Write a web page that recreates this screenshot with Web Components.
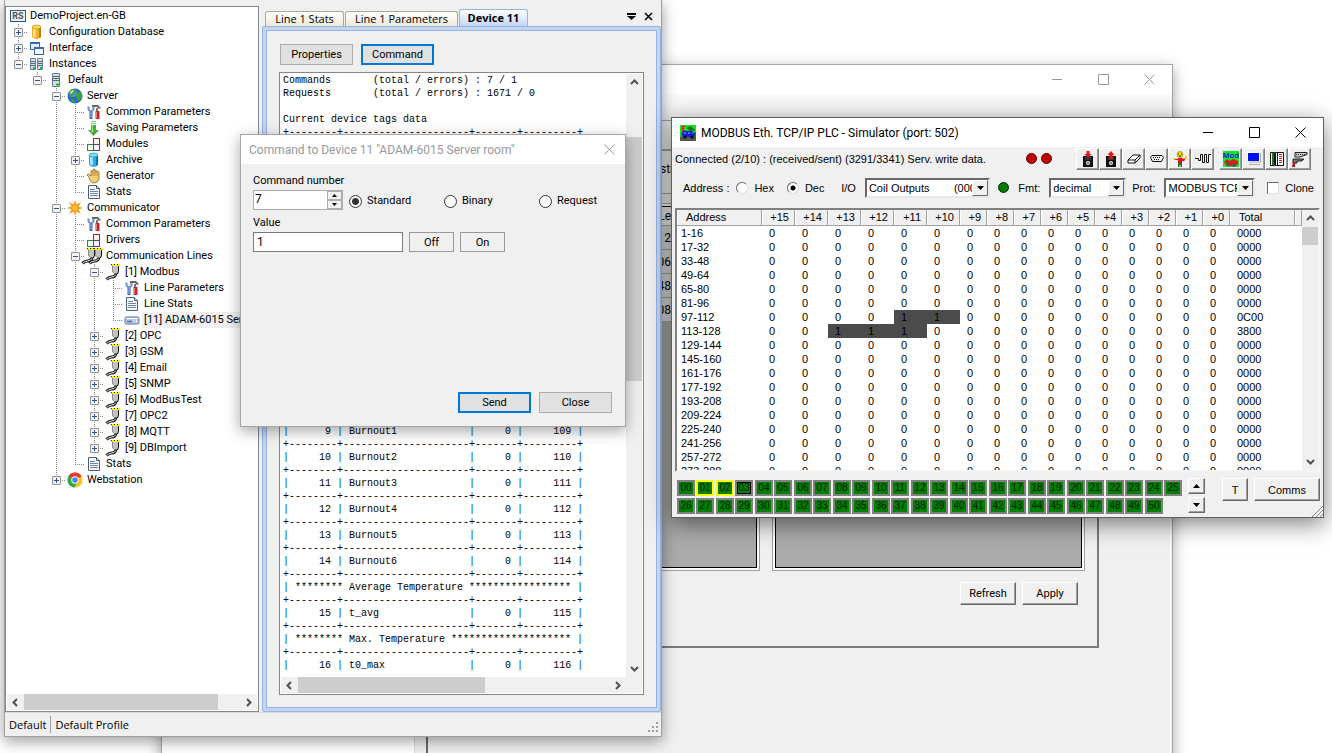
<!DOCTYPE html>
<html lang="en">
<head>
<meta charset="utf-8">
<title>DemoProject.en-GB</title>
<style>
  html, body {
    height: 100%;
    margin: 0;
  }
  body {
    overflow: hidden;
    background: #fff;
    color: #000;
    font-family: Roboto, "Liberation Sans", sans-serif;
    font-size: 11px;
    --title-font: Roboto, "Open Sans", sans-serif;
  }
</style>
</head>
<body>
<desk-top></desk-top>

<script>
/* ---------- icons ---------- */
const CONNECTOR = `
  <path d="M10.500 9v2q-1 2-4 2-3 0-5 2.500" fill="none" stroke="#222" stroke-width="3"/>
  <path d="M10.500 9v2q-1 2-4 2-3 0-5 2.500" fill="none" stroke="#ddd"/>
  <path d="M7 2h7v5l-1 3h-4L7 7z" fill="#c4c4c4"/>
  <path d="M13.500 2v5l-1 3h-3" fill="none" stroke="#111"/><path d="M7.500 2v5l1 2" fill="none" stroke="#888"/>
  <path d="M6 1h9" stroke="#ffee00" stroke-width="2"/><path d="M6 .5h9" stroke="#222" stroke-dasharray="1 2"/>`;

const ICONS = {
  rs: `<rect x=".5" y="2.500" width="15" height="11" fill="#e8eef4" stroke="#2a5d98"/>
    <text x="8" y="11" font-size="9" font-weight="bold" text-anchor="middle" fill="#555">RS</text>`,
  db: `<path d="M3 3v10q5 4 9 0V3z" fill="#f0b020"/><path d="M4 4v9h3V4z" fill="#ffe48a"/><path d="M10 4v10l2-1V3z" fill="#bd7c08"/><ellipse cx="7.500" cy="3" rx="4.500" ry="2" fill="#ffd75e" stroke="#b07810" stroke-width=".6"/>`,
  archive: `<path d="M3 3v10q5 4 9 0V3z" fill="#28aee8"/><path d="M4 4v9h3V4z" fill="#9be4ff"/><path d="M10 4v10l2-1V3z" fill="#0878b0"/><ellipse cx="7.500" cy="3" rx="4.500" ry="2" fill="#7fdcff" stroke="#0a80b8" stroke-width=".6"/>`,
  windows: `<rect x="1.500" y="2.500" width="9" height="7" fill="#eaf2ff" stroke="#3a5f9c"/><path d="M1 3h10" stroke="#3a68b8" stroke-width="2"/>
    <rect x="5.500" y="7.500" width="9" height="7" fill="#f4f8ff" stroke="#3a5f9c"/><path d="M5 8h10" stroke="#3a68b8" stroke-width="2"/>`,
  servers: `<g stroke="#6c7f92" fill="#d5e0ea"><path d="M1.500 2.500h5v11h-5zM8.500 2.500h5v11h-5z"/></g>
    <path d="M2 5.500h4M2 7.500h4M2 9.500h4M9 5.500h4M9 7.500h4M9 9.500h4" stroke="#51687e"/><path d="M4 12h2M11 12h2" stroke="#10c020" stroke-width="2"/>`,
  server: `<path d="M4.500 1.500h7v13h-7z" fill="#d5e0ea" stroke="#6c7f92"/><path d="M5 4.500h6M5 6.500h6M5 8.500h6" stroke="#51687e"/><path d="M8 12.500h3" stroke="#10c020" stroke-width="2"/>`,
  globe: `<circle cx="8" cy="8" r="7.500" fill="#2c68c4"/><circle cx="6" cy="5" r="4" fill="#79a9ea" opacity=".6"/>
    <path d="M2 4l3-3 4 1-1 3-3 2-1 3-2-2zM9 6l4-3 2 4-1 4-3 2-2-4zM5 11l3 1-1 3-3-2z" fill="#3aa53a"/><path d="M3 4l3-2 1 1-3 3z" fill="#d6f2c8"/>`,
  tools: `<path d="M5 7v8" stroke="#2c62b0" stroke-width="3"/><path d="M5 8v6" stroke="#a8c4ec"/><path d="M2.500 2.500v3q2.500 3.500 5 0v-3" fill="none" stroke="#6d94cc" stroke-width="2"/>
    <path d="M11 4v5" stroke="#777" stroke-width="2"/><path d="M6 1l6 0 3 3-2 1-2-2H6z" fill="#666"/><path d="M11.500 7v8" stroke="#c02828" stroke-width="4"/><path d="M10.500 8v6" stroke="#f08080"/>`,
  down: `<path d="M5 1.500h5M5 3.500h5" stroke="#7fc07f"/><path d="M5 5h5v5h3l-5.500 6L2 10h3z" fill="#43ae38"/><path d="M6 5h1v8l-3-2.500h2z" fill="#98e088"/>`,
  modules: `<rect x="7.500" y="2.500" width="6" height="6" fill="#fff0f0" stroke="#b02030"/><rect x="1.500" y="8.500" width="6" height="6" fill="#f0fff0" stroke="#2c8a38"/><rect x="7.500" y="8.500" width="6" height="6" fill="#f6f0ff" stroke="#5a3c90"/>`,
  hand: `<path d="M3 9L1 7q1-2 3 0l1 1V3q1-1 2 0V1.500q1-1 2 0V3q1-1 2 0v1q2-1 2 0v7q-1 4-5 4T3 9z" fill="#f2cf80" stroke="#8e6410" stroke-width=".8"/><path d="M7 3v5M9 3v5M11 4v4" stroke="#a87820" stroke-width=".8"/>`,
  page: `<path d="M2.500 1.500h8l3 3v10h-11z" fill="#f4f8fd" stroke="#4a6080"/><path d="M10.500 1.500v3h3" fill="#c8d6e6" stroke="#4a6080"/><path d="M4 5.500h5M4 7.500h8M4 9.500h8M4 11.500h8" stroke="#6b84a8"/>`,
  star: `<path d="M8 0l1.500 4.500L14 2l-2.500 4.500L16 8l-4.500 1.500L14 14l-4.500-2.500L8 16l-1.500-4.500L2 14l2.500-4.500L0 8l4.500-1.500L2 2l4.500 2.500z" fill="#f79c16"/><circle cx="8" cy="8" r="2.500" fill="#ffc240"/>`,
  line: CONNECTOR,
  lines: `<g transform="translate(-5 0)">${CONNECTOR}</g><g transform="translate(2 0)">${CONNECTOR}</g>`,
  device: `<rect x="1" y="5" width="14" height="7" rx="1.500" fill="#b9cbe6" stroke="#5a76a4"/><path d="M2 6.500h12" stroke="#fff"/><path d="M3 9.500h5" stroke="#4a6aa0" stroke-width="1.500"/><path d="M12 9.500h1" stroke="#fff" stroke-width="2"/>`,
  chrome: `<circle cx="8" cy="8" r="7.500" fill="#fbc116"/><path d="M8 8L1.500 4.300A7.500 7.500 0 0 1 14.500 4.300z" fill="#e33b2e"/><path d="M8 8L1.500 4.300A7.500 7.500 0 0 0 7.500 15.500L11 9z" fill="#2da94f"/><path d="M1.500 4.300L8 4.500h6.500A7.500 7.500 0 0 0 1.500 4.300z" fill="#e33b2e"/><circle cx="8" cy="8" r="3.700" fill="#fff"/><circle cx="8" cy="8" r="2.800" fill="#4a86e8"/>`,
  sim: `<rect width="16" height="16" fill="#10e020"/><path d="M0 12l16-5v9H0z" fill="#555"/><path d="M2 1.500h3M2.500 1v5M2 3.500h2M2 5.500h3" stroke="#e01010"/><path d="M6 3l5-2 4 4-4 2z" fill="#1d7a20"/><path d="M1 9l2-3h9l3 3-1 3H3z" fill="#1020d8"/><path d="M4 8h2M8 8h2M12 8h1" stroke="#8cf"/><circle cx="5" cy="12" r="1.500"/><circle cx="12" cy="12" r="1.500"/>`,
  load: `<path d="M3 5h10v11H3z" fill="#111"/><path d="M5 6h6v3H5z" fill="#333"/><circle cx="8" cy="12" r="2" fill="#eee"/><circle cx="8" cy="12" r=".8"/><path d="M6.500 0h3v3h2L8 7 4.500 3h2z" fill="#f01010"/>`,
  save: `<path d="M3 5h10v11H3z" fill="#111"/><path d="M5 6h6v3H5z" fill="#333"/><circle cx="8" cy="12" r="2" fill="#eee"/><circle cx="8" cy="12" r=".8"/><path d="M6.500 8h3V4h2L8 0 4.500 4h2z" fill="#f01010"/>`,
  erase: `<path d="M2 9l5-5h7l-5 5zM2 9v3h7V9M9 12l5-5V4" fill="#fff" stroke="#111"/>`,
  serial: `<path d="M3 4.500h10l1.500 2-2 4h-9l-2-4z" fill="#eee" stroke="#111"/><path d="M4 6.500h8M5 8.500h6" stroke="#111" stroke-dasharray="1 1"/>`,
  man: `<circle cx="8" cy="3.500" r="3" fill="#f8e000" stroke="#806000" stroke-width=".5"/><path d="M6 3h1M9 3h1M7 5h2" stroke="#111"/><path d="M2 8h3l2-1h3l2 1 1-1v2l-1 1h-2v2H6V9H2z" fill="#e81010"/><path d="M13 5h2v3h-2zM1 7h2v2H1z" fill="#f8d000"/><path d="M6 12h4v4H8.500v-2h-1v2H6z" fill="#187818"/>`,
  wave: `<path d="M0 7.500h3.500v2h2v-6h2v8h2v-8h2v8h2v-8H16" fill="none" stroke="#111"/>`,
  mod: `<rect width="16" height="16" fill="#10e830"/><text x="8" y="7" font-size="8" font-weight="bold" text-anchor="middle" fill="#1020d0">Mod</text><path d="M1 11l3-3 3 2 3-2 5 2v3l-3 2H4z" fill="#e81818"/><circle cx="5" cy="13" r="2" fill="#555"/><circle cx="11" cy="14" r="2" fill="#555"/>`,
  monitor: `<path d="M1 1h14v10H1z" fill="#fff"/><path d="M2 2h11v8H2z" fill="#0010f0"/><path d="M14.500 2v9H3M3 13.500h11" fill="none" stroke="#aaa"/>`,
  book: `<path d="M1.500 1.500h4v13h-4zM6.500 1.500h8v13h-8z" fill="#fff" stroke="#111"/><path d="M4 2v12" stroke="#1a7a1a" stroke-width="2"/><path d="M8.500 2v12" stroke="#111"/><path d="M10 3.500h3M10 5.500h3M10 7.500h3M10 9.500h3M10 11.500h3" stroke="#e02020"/>`,
  keys: `<path d="M3 1.500h12v2L8 6H3z" fill="#ccc" stroke="#222"/><path d="M4 3.500h9" stroke="#222" stroke-dasharray="1 1"/><path d="M1 8h11l-2 2H5v2H1z" fill="#777" stroke="#222"/><path d="M1 11h2v5H0z" fill="#b01818"/>`
};

class AppIcon extends HTMLElement {
  connectedCallback() {
    this.attachShadow({ mode: 'open' }).innerHTML = `
      <style>
        :host { display: block; width: 16px; height: 16px; flex: none; }
        svg { display: block; width: 100%; height: 100%; overflow: visible; }
      </style>
      <svg viewBox="0 0 16 16" aria-hidden="true">${ICONS[this.getAttribute('name')] || ''}</svg>
    `;
  }
}

/* ---------- scroll bar ---------- */
const CHEVRONS = {
  up: 'M1 6l3.500-3.500L8 6', down: 'M1 3l3.500 3.500L8 3',
  left: 'M6 1L2.500 4.500 6 8', right: 'M3 1l3.500 3.500L3 8'
};

class ScrollBar extends HTMLElement {
  connectedCallback() {
    const across = this.hasAttribute('horizontal');
    const arrow = (dir) => `<button aria-label="Scroll ${dir}"><svg width="9" height="9"><path d="${CHEVRONS[dir]}" fill="none" stroke="#505050" stroke-width="2"/></svg></button>`;
    this.attachShadow({ mode: 'open' }).innerHTML = `
      <style>
        :host { display: flex; flex-direction: ${across ? 'row' : 'column'}; background: #f0f0f0; ${across ? 'height' : 'width'}: 16px; }
        button { flex: none; width: 17px; height: 17px; padding: 0; border: 0; background: none; display: grid; place-items: center; }
        .track { flex: 1; display: flex; flex-direction: inherit; }
        .before { flex: ${this.getAttribute('start') || 0} 0 0; }
        .thumb { flex: ${this.getAttribute('size') || 50} 0 0; background: #cdcdcd; }
        .after { flex: ${100 - this.getAttribute('start') - this.getAttribute('size')} 0 0; }
      </style>
      ${arrow(across ? 'left' : 'up')}
      <div class="track"><div class="before"></div><div class="thumb"></div><div class="after"></div></div>
      ${arrow(across ? 'right' : 'down')}
    `;
  }
}

/* ---------- window frame ---------- */
class WinFrame extends HTMLElement {
  connectedCallback() {
    const full = this.hasAttribute('full');
    const color = this.hasAttribute('active') ? '#000' : '#999';
    const button = (label, path) => `<button aria-label="${label}"><svg width="11" height="11"><path d="${path}" fill="none" stroke="${color}"/></svg></button>`;
    this.attachShadow({ mode: 'open' }).innerHTML = `
      <style>
        :host { display: flex; flex-direction: column; box-sizing: border-box; border: 1px solid #a5a5a5; background: #f0f0f0; box-shadow: 0 4px 14px rgba(0,0,0,.35); }
        :host([active]) { border-color: #606060; box-shadow: 0 6px 22px rgba(0,0,0,.5); }
        header { display: flex; align-items: center; height: 29px; flex: none; background: #fff; color: ${color}; padding-left: 8px; font: 12px var(--title-font); }
        h2 { flex: 1; margin: 0; font: inherit; white-space: nowrap; }
        ::slotted(app-icon) { margin-right: 5px; }
        button { width: ${full ? 46 : 31}px; height: 100%; padding: 0; border: 0; background: none; display: grid; place-items: center; }
      </style>
      <header>
        <slot name="icon"></slot>
        <h2>${this.getAttribute('label') || ''}</h2>
        ${full ? button('Minimise', 'M0 5.500h10') + button('Maximise', 'M.5 .5h10v10H.5z') : ''}
        ${button('Close', 'M.5 .5l10 10M10.500 .5l-10 10')}
      </header>
      <slot></slot>
    `;
  }
}

/* ---------- project tree ---------- */
const branch = (icon, text, children, open) => ({ icon, text, children, open });
const TREE = [
  branch('db', 'Configuration Database', []),
  branch('windows', 'Interface', []),
  branch('servers', 'Instances', [
    branch('server', 'Default', [
      branch('globe', 'Server', [
        branch('tools', 'Common Parameters'),
        branch('down', 'Saving Parameters'),
        branch('modules', 'Modules'),
        branch('archive', 'Archive', []),
        branch('hand', 'Generator'),
        branch('page', 'Stats')
      ], true),
      branch('star', 'Communicator', [
        branch('tools', 'Common Parameters'),
        branch('modules', 'Drivers'),
        branch('lines', 'Communication Lines', [
          branch('line', '[1] Modbus', [
            branch('tools', 'Line Parameters'),
            branch('page', 'Line Stats'),
            { icon: 'device', text: '[11] ADAM-6015 Server room', selected: true }
          ], true),
          ...['OPC', 'GSM', 'Email', 'SNMP', 'ModBusTest', 'OPC2', 'MQTT', 'DBImport']
            .map((name, i) => branch('line', `[${i + 2}] ${name}`, []))
        ], true),
        branch('page', 'Stats')
      ], true),
      branch('chrome', 'Webstation', [])
    ], true)
  ], true)
];

class ProjectTree extends HTMLElement {
  rows(nodes, guides) {
    return nodes.map((node, i) => {
      const last = i === nodes.length - 1;
      const toggle = node.children
        ? `<button class="${node.open ? 'open' : ''}" aria-label="Toggle ${node.text}"></button>` : '';
      const row = `<li>${guides}<i class="${last ? 'last' : 'tee'}">${toggle}</i><app-icon name="${node.icon}"></app-icon><span class="${node.selected ? 'selected' : ''}">${node.text}</span></li>`;
      return row + (node.open ? this.rows(node.children, guides + `<i class="${last ? '' : 'pass'}"></i>`) : '');
    }).join('');
  }
  connectedCallback() {
    this.attachShadow({ mode: 'open' }).innerHTML = `
      <style>
        :host { display: flex; flex-direction: column; box-sizing: border-box; background: #fff; border: 1px solid #828790; overflow: hidden; padding: 1px; }
        ul { flex: 1; list-style: none; margin: 0; padding: 0 0 0 2px; overflow: hidden; }
        li { display: flex; align-items: center; height: 16px; white-space: nowrap; }
        i { position: relative; width: 19px; height: 16px; flex: none; display: grid; place-items: center; }
        .tee, .pass { background: repeating-linear-gradient(#888 0 1px, transparent 1px 2px) 9px 0 / 1px 16px no-repeat; }
        .last { background: repeating-linear-gradient(#888 0 1px, transparent 1px 2px) 9px 0 / 1px 8px no-repeat; }
        .tee::after, .last::after { content: ""; position: absolute; left: 9px; right: 0; top: 8px; height: 1px; background: repeating-linear-gradient(90deg, #888 0 1px, transparent 1px 2px); }
        button { position: relative; z-index: 1; width: 9px; height: 9px; padding: 0; border: 1px solid #919191; border-radius: 1px;
          background: linear-gradient(#3050a0, #3050a0) center / 5px 1px no-repeat, linear-gradient(#3050a0, #3050a0) center / 1px 5px no-repeat, #f4f4f4; }
        button.open { background: linear-gradient(#3050a0, #3050a0) center / 5px 1px no-repeat, #f4f4f4; }
        app-icon { margin: 0 2px 0 1px; }
        span { padding: 0 2px; line-height: 16px; }
        .selected { background: #f0f0f0; }
      </style>
      <ul>
        <li><app-icon name="rs"></app-icon><span>DemoProject.en-GB</span></li>
        ${this.rows(TREE, '')}
      </ul>
      <scroll-bar horizontal start="0" size="90"></scroll-bar>
    `;
  }
}

/* ---------- device console ---------- */
const RULE = '+--------+---------------------+-------+---------+';
const tag = (num, name) => `|${String(num).padStart(7)} | ${name.padEnd(20)}|     0 |     ${num + 100} |`;
const group = (name) => `| ******** ${name} ${'*'.repeat(36 - name.length)} |`;

class DeviceConsole extends HTMLElement {
  connectedCallback() {
    const lines = [
      'Commands       (total / errors) : 7 / 1',
      'Requests       (total / errors) : 1671 / 0',
      '',
      'Current device tags data',
      RULE,
      ...Array(22).fill('')
    ];
    for (let n = 9; n <= 14; n++) lines.push(tag(n, 'Burnout' + (n - 8)), RULE);
    lines.push(group('Average Temperature'), RULE, tag(15, 't_avg'), RULE, group('Max. Temperature'), RULE, tag(16, 't0_max'));
    this.attachShadow({ mode: 'open' }).innerHTML = `
      <style>
        :host { display: grid; grid-template: minmax(0, 1fr) 16px / minmax(0, 1fr) 16px; box-sizing: border-box; border: 1px solid #828790; background: #fff; padding: 1px; }
        pre { margin: 0; padding: 0 2px; overflow: hidden; font: 10px/13px "Liberation Mono", monospace; }
        b { color: #3b94d9; }
        .corner { background: #f0f0f0; }
      </style>
      <pre>${lines.join('\n').replace(/\|/g, '<b>|</b>')}</pre>
      <scroll-bar start="8" size="43"></scroll-bar>
      <scroll-bar horizontal start="0" size="60"></scroll-bar>
      <div class="corner"></div>
    `;
  }
}

/* ---------- push button ---------- */
class PushButton extends HTMLElement {
  connectedCallback() {
    this.attachShadow({ mode: 'open' }).innerHTML = `
      <style>
        :host { display: block; width: 73px; height: 21px; }
        button { width: 100%; height: 100%; padding: 0; box-sizing: border-box; border: 1px solid #adadad; background: #e1e1e1; color: inherit; font: inherit; display: grid; place-items: center; }
        :host([default]) button { border: 2px solid #0078d7; }
        :host([plain]) button { background: #f0f0f0; border-color: #999; }
        :host([classic]) button { background: #f0f0f0; border: 1px solid; border-color: #fff #696969 #696969 #fff; box-shadow: inset -1px -1px #a0a0a0; }
      </style>
      <button><slot></slot></button>
    `;
  }
}

/* ---------- main application ---------- */
class AppWindow extends HTMLElement {
  connectedCallback() {
    this.attachShadow({ mode: 'open' }).innerHTML = `
      <style>
        :host { display: flex; flex-direction: column; box-sizing: border-box; border: 1px solid #a0a0a0; border-top: 0; background: #f0f0f0; box-shadow: 0 4px 14px rgba(0,0,0,.4); }
        main { flex: 1; min-height: 0; display: grid; grid-template-columns: 254px minmax(0, 1fr); gap: 3px; padding-top: 6px; }
        .docs { display: flex; flex-direction: column; min-width: 0; }
        nav { display: flex; align-items: flex-end; height: 20px; padding: 0 5px 0 3px; gap: 1px; }
        nav button { padding: 0; border: 1px solid #a8a898; border-bottom: 0; border-radius: 3px 3px 0 0; height: 15px; background: linear-gradient(#fff, #ece9d8); white-space: nowrap; font: 11px/14px "Open Sans", sans-serif; }
        nav .current { height: 17px; border-color: #95b3e4; background: linear-gradient(#fff, #c3d5f2); font-weight: bold; }
        nav .space { flex: 1; }
        nav .glyph { border: 0; background: none; width: 16px; align-self: center; display: grid; place-items: center; }
        .stats { width: 79px; }
        .params { width: 113px; }
        .device { width: 69px; }
        .frame { flex: 1; min-height: 0; display: flex; flex-direction: column; box-sizing: border-box; border: 1px solid #95b3e4; background: #c3d5f0; padding: 3px; border-radius: 2px; }
        .page { flex: 1; min-height: 0; display: flex; flex-direction: column; gap: 7px; border: 1px solid #95b3e4; background: #f0f0f0; padding: 13px 12px 12px; }
        .actions { display: flex; gap: 8px; padding-left: 1px; }
        device-console { flex: 1; min-height: 0; }
        footer { display: flex; align-items: center; height: 23px; border-top: 1px solid #d8d8d8; padding: 0 2px 0 4px; font: 11px "Open Sans", sans-serif; }
        footer span + span { border-left: 1px solid #a0a0a0; margin-left: 4px; padding-left: 4px; }
        footer span { line-height: 17px; }
        footer svg { margin-left: auto; align-self: flex-end; padding-bottom: 3px; }
      </style>
      <main>
        <project-tree></project-tree>
        <section class="docs">
          <nav>
            <button class="stats">Line 1 Stats</button>
            <button class="params">Line 1 Parameters</button>
            <button class="device current">Device 11</button>
            <span class="space"></span>
            <button class="glyph" aria-label="Documents"><svg width="9" height="7"><path d="M0 1h9" stroke="#000" stroke-width="2"/><path d="M0 3h9L4.500 7z"/></svg></button>
            <button class="glyph" aria-label="Close document"><svg width="9" height="9"><path d="M1 1l7 7M8 1L1 8" stroke="#000" stroke-width="1.500"/></svg></button>
          </nav>
          <div class="frame">
            <div class="page">
              <div class="actions">
                <push-button>Properties</push-button>
                <push-button default>Command</push-button>
              </div>
              <device-console></device-console>
            </div>
          </div>
        </section>
      </main>
      <footer>
        <span>Default</span><span>Default Profile</span>
        <svg width="11" height="11" fill="#a0a0a0"><path d="M8 0h2v2H8zM8 4h2v2H8zM4 4h2v2H4zM8 8h2v2H8zM4 8h2v2H4zM0 8h2v2H0z"/></svg>
      </footer>
    `;
  }
}

/* ---------- command dialog ---------- */
class CommandForm extends HTMLElement {
  connectedCallback() {
    const modes = ['Standard', 'Binary', 'Request'];
    this.attachShadow({ mode: 'open' }).innerHTML = `
      <style>
        :host { flex: 1; display: flex; flex-direction: column; padding: 10px 12px 13px; }
        label { line-height: 14px; }
        .row { display: flex; align-items: center; height: 20px; gap: 6px; margin: 2px 0 6px; }
        input:not([type=radio]) { box-sizing: border-box; height: 20px; width: 150px; border: 1px solid #7a7a7a; padding: 0 3px; font: inherit; font-size: 12px; background: #fff; }
        .spin { position: relative; display: flex; flex: none; width: 90px; }
        .spin input:not([type=radio]) { width: 100%; border-color: #adadad; padding-left: 1px; padding-bottom: 2px; }
        .steps { position: absolute; right: 1px; top: 1px; bottom: 1px; width: 15px; display: grid; }
        .steps button { padding: 0; border: 1px solid #adadad; background: #f0f0f0; display: grid; place-items: center; }
        .modes { flex: 1; display: grid; grid-template-columns: repeat(3, 95px); }
        .modes label { display: flex; align-items: center; gap: 5px; padding-top: 2px; }
        .modes input { appearance: none; width: 13px; height: 13px; margin: 0; border: 1px solid #333; border-radius: 50%; background: #fff; }
        .modes input:checked { background: radial-gradient(#333 0 3px, #fff 4px); }
        .row push-button { width: 45px; height: 20px; }
        footer { margin-top: auto; display: flex; justify-content: flex-end; gap: 8px; padding-right: 1px; }
      </style>
      <label for="number">Command number</label>
      <div class="row">
        <div class="spin">
          <input id="number" value="7">
          <div class="steps">
            <button aria-label="Increase"><svg width="5" height="3"><path d="M0 3h5L2.500 0z"/></svg></button>
            <button aria-label="Decrease"><svg width="5" height="3"><path d="M0 0h5L2.500 3z"/></svg></button>
          </div>
        </div>
        <div class="modes">
          ${modes.map((m, i) => `<label><input type="radio" name="mode"${i ? '' : ' checked'}>${m}</label>`).join('')}
        </div>
      </div>
      <label for="value">Value</label>
      <div class="row">
        <input id="value" value="1">
        <push-button plain>Off</push-button>
        <push-button plain>On</push-button>
      </div>
      <footer>
        <push-button default>Send</push-button>
        <push-button>Close</push-button>
      </footer>
    `;
  }
}

/* ---------- service window behind ---------- */
class ServicePanel extends HTMLElement {
  connectedCallback() {
    this.attachShadow({ mode: 'open' }).innerHTML = `
      <style>
        :host { flex: 1; display: flex; min-height: 0; border-right: 1px solid #fff; margin-right: 1px; }
        .list { width: 252px; background: #fff; border-right: 1px solid #dcdcdc; }
        .view { flex: 1; margin-left: 11px; border-left: 2px solid #696969; display: flex; flex-direction: column; }
        .bar { height: 26px; background: linear-gradient(#fafafa, #f0f0f0); }
        .panel { height: 528px; margin-right: 71px; box-sizing: border-box; border: 1px solid #a0a0a0; border-width: 1px 2px 2px 0; border-color: #a0a0a0 #7a7a7a #7a7a7a; display: flex; flex-direction: column; }
        .head { height: 28px; border-bottom: 2px solid #a0a0a0; }
        .sub { height: 43px; box-sizing: border-box; padding: 11px 0 0 232px; border-bottom: 1px solid #a0a0a0; font-size: 12px; }
        .grids { display: grid; grid-template-columns: 332px minmax(0, 1fr); gap: 12px; height: 368px; margin: 9px 12px 0 0; }
        .grid { border: 1px solid #a0a0a0; background: #fff; padding: 2px; }
        .field { height: 100%; box-sizing: border-box; background: #ababab; border: 1px solid #000; }
        table { border-collapse: collapse; margin-left: 201px; background: #f0f0f0; font-size: 12px; }
        th, td { width: 38px; height: 23px; padding: 0; border-bottom: 1px solid #a0a0a0; text-align: right; font-weight: normal; }
        th { height: 18px; }
        td { background: #dcdcdc; }
        .buttons { display: flex; justify-content: flex-end; gap: 6px; margin: 11px 19px 0 0; }
        push-button { width: 56px; height: 23px; }
      </style>
      <div class="list"></div>
      <div class="view">
        <div class="bar"></div>
        <div class="panel">
          <div class="head"></div>
          <div class="sub">str</div>
          <div class="grids">
            <div class="grid"><div class="field">
              <table>
                <tr><th>Le</th></tr>
                <tr><td>2</td></tr><tr><td>06</td></tr><tr><td>48</td></tr><tr><td>08</td></tr>
              </table>
            </div></div>
            <div class="grid"><div class="field"></div></div>
          </div>
          <div class="buttons">
            <push-button classic>Refresh</push-button>
            <push-button classic>Apply</push-button>
          </div>
        </div>
      </div>
    `;
  }
}

/* ---------- PLC simulator ---------- */
class CoilGrid extends HTMLElement {
  connectedCallback() {
    const offsets = Array.from({ length: 16 }, (_, i) => 15 - i);
    const set = { 6: [11, 10], 7: [13, 12, 11] };
    const totals = { 6: '0C00', 7: '3800' };
    const row = (r) => `
      <tr><td>${r * 16 + 1}-${r * 16 + 16}</td>${offsets.map((o) => {
        const on = (set[r] || []).includes(o);
        return `<td${on ? ' class="on"' : ''}>${on ? 1 : 0}</td>`;
      }).join('')}<td>${totals[r] || '0000'}</td><td></td></tr>`;
    this.attachShadow({ mode: 'open' }).innerHTML = `
      <style>
        :host { display: flex; box-sizing: border-box; background: #fff; border: 2px solid; border-color: #808080 #f4f4f4 #f4f4f4 #808080; overflow: hidden; }
        .body { flex: 1; overflow: hidden; }
        table { width: 100%; table-layout: fixed; border-collapse: separate; border-spacing: 0; }
        tr { height: 14px; }
        td { padding: 0 0 0 7px; height: 14px; line-height: 14px; }
        td:first-child { padding-left: 4px; }
        th { box-sizing: border-box; height: 16px; padding: 0 5px 0 0; line-height: 15px; text-align: right; font-weight: normal; background: #f0f0f0; border: 1px solid #a0a0a0; border-width: 0 1px 1px 0; box-shadow: inset 1px 0 #fff; }
        th:first-child, th:nth-last-child(2) { text-align: left; padding-left: 9px; }
        .on { background: #4b4b4b; }
      </style>
      <div class="body">
        <table>
          <colgroup>
            <col style="width: 85px"><col span="6" style="width: 33px"><col span="10" style="width: 27px"><col style="width: 65px"><col>
          </colgroup>
          <thead><tr><th>Address</th>${offsets.map((o) => `<th>+${o}</th>`).join('')}<th>Total</th><th></th></tr></thead>
          <tbody>${Array.from({ length: 18 }, (_, r) => row(r)).join('')}</tbody>
        </table>
      </div>
      <scroll-bar start="0" size="8"></scroll-bar>
    `;
  }
}

class ComboBox extends HTMLElement {
  connectedCallback() {
    const value = this.getAttribute('value');
    this.attachShadow({ mode: 'open' }).innerHTML = `
      <style>
        :host { display: flex; align-items: center; flex: none; gap: 9px; }
        label { white-space: nowrap; }
        .box { position: relative; flex: 1; min-width: 0; display: flex; height: 20px; box-sizing: border-box; border: 2px solid; border-color: #696969 #e8e8e8 #e8e8e8 #696969; background: #fff; }
        select { width: 100%; appearance: none; border: 0; padding: 0 16px 0 2px; background: none; font: inherit; color: inherit; outline: 0; }
        .arrow { position: absolute; right: 0; top: 0; bottom: 0; width: 16px; box-sizing: border-box; border: 1px solid; border-color: #fff #696969 #696969 #fff; background: #f0f0f0; display: grid; place-items: center; pointer-events: none; }
      </style>
      <label for="list"><slot></slot></label>
      <div class="box">
        <select id="list"><option>${value}</option></select>
        <span class="arrow"><svg width="7" height="4"><path d="M0 0h7L3.500 4z"/></svg></span>
      </div>
    `;
  }
}

class PlcSimulator extends HTMLElement {
  connectedCallback() {
    const tools = (names) => names.map(([n, l]) => `<button aria-label="${l}"><app-icon name="${n}"></app-icon></button>`).join('');
    const coil = (i) => `<button class="${i === 1 || i === 2 ? 'warn' : i === 3 ? 'current' : ''}">${String(i).padStart(2, '0')}</button>`;
    const pairs = (from, to) => {
      let html = '';
      for (let i = from; i <= to; i += 2) html += `<span>${coil(i)}${i < to ? coil(i + 1) : ''}</span>`;
      return html;
    };
    this.attachShadow({ mode: 'open' }).innerHTML = `
      <style>
        :host { flex: 1; min-height: 0; display: flex; flex-direction: column; padding: 0 3px 3px; font-family: "Liberation Sans", Arial, sans-serif; }
        .status { display: flex; align-items: center; height: 23px; }
        .status p { flex: 1; margin: 0; }
        .lamp { width: 9px; height: 9px; border: 1px solid #600; border-radius: 50%; background: #c00000; margin-right: 4px; flex: none; }
        .lamp.green { background: #007800; border-color: #030; margin: 0 9px 0 8px; }
        .tools { display: flex; margin-left: 5px; }
        .tools:first-of-type { margin-left: 20px; }
        .tools button { width: 23px; height: 22px; padding: 0; box-sizing: border-box; background: #f0f0f0; border: 1px solid; border-color: #fff #808080 #808080 #fff; box-shadow: inset -1px -1px #a0a0a0; display: grid; place-items: center; }
        .tools:last-of-type { margin-right: 9px; }
        .filters { display: flex; align-items: center; height: 35px; padding: 0 6px 0 8px; white-space: nowrap; }
        .filters label { display: flex; align-items: center; gap: 6px; }
        .filters input { appearance: none; box-sizing: border-box; width: 12px; height: 12px; margin: 0; background: #fff; border: 1px solid; border-color: #696969 #e0e0e0 #e0e0e0 #696969; }
        .filters input[type=radio] { border-radius: 50%; }
        .filters input:checked { background: radial-gradient(#000 0 2px, #fff 3px); }
        .title { width: 55px; }
        .hex { width: 52px; }
        .dec { width: 56px; }
        .io { width: 149px; }
        .format { width: 108px; }
        .protocol { width: 123px; margin: 0 12px 0 6px; }
        coil-grid { flex: 1; min-height: 0; margin-top: 3px; }
        .bottom { display: flex; align-items: flex-start; padding: 6px 0 0 2px; }
        .coils { display: grid; gap: 2px; padding-top: 2px; }
        .line { display: flex; gap: 2px; }
        .line span { display: flex; gap: 1px; }
        .line button { width: 18px; height: 16px; padding: 0; box-sizing: border-box; border: 2px solid #808080; background: #008000; color: #001800; font: 10px/12px "Liberation Sans", sans-serif; text-align: center; }
        .line .warn { border-color: #ff0; }
        .line .current { border-color: #808080; box-shadow: inset 0 0 0 1px #000; }
        .pager { display: grid; gap: 3px; width: 17px; margin: 0 17px 0 6px; }
        .pager button { height: 16px; padding: 0; background: #f0f0f0; border: 1px solid; border-color: #fff #696969 #696969 #fff; box-shadow: inset -1px -1px #a0a0a0; display: grid; place-items: center; }
        .bottom push-button { height: 23px; }
        .t { width: 26px; }
        .comms { width: 66px; margin-left: 6px; }
        .pushes { display: flex; margin-left: auto; }
        .grip { position: absolute; right: 0; bottom: 0; }
      </style>
      <div class="status">
        <p>Connected (2/10) : (received/sent) (3291/3341) Serv. write data.</p>
        <span class="lamp"></span><span class="lamp"></span>
        <div class="tools">${tools([['load', 'Load'], ['save', 'Save'], ['erase', 'Erase'], ['serial', 'Serial port'], ['man', 'Script'], ['wave', 'Noise']])}</div>
        <div class="tools">${tools([['mod', 'Modbus'], ['monitor', 'Display'], ['book', 'Help'], ['keys', 'Registers']])}</div>
      </div>
      <div class="filters">
        <span class="title">Address :</span>
        <label class="hex"><input type="radio" name="base">Hex</label>
        <label class="dec"><input type="radio" name="base" checked>Dec</label>
        <combo-box class="io" value="Coil Outputs${'&nbsp;'.repeat(8)}(000">I/O</combo-box>
        <span class="lamp green"></span>
        <combo-box class="format" value="decimal">Fmt:</combo-box>
        <combo-box class="protocol" value="MODBUS TCP">Prot:</combo-box>
        <label><input type="checkbox">Clone</label>
      </div>
      <coil-grid></coil-grid>
      <div class="bottom">
        <div class="coils">
          <div class="line">${pairs(0, 25)}</div>
          <div class="line">${pairs(26, 50)}</div>
        </div>
        <div class="pager">
          <button aria-label="Previous"><svg width="7" height="4"><path d="M0 4h7L3.500 0z"/></svg></button>
          <button aria-label="Next"><svg width="7" height="4"><path d="M0 0h7L3.500 4z"/></svg></button>
        </div>
        <div class="pushes">
          <push-button classic class="t">T</push-button>
          <push-button classic class="comms">Comms</push-button>
        </div>
      </div>
      <svg class="grip" width="11" height="11"><path d="M0 11L11 0M4 11l7-7M8 11l3-3" stroke="#888"/></svg>
    `;
  }
}

/* ---------- desktop ---------- */
class DeskTop extends HTMLElement {
  connectedCallback() {
    this.attachShadow({ mode: 'open' }).innerHTML = `
      <style>
        :host { display: block; position: relative; height: 100vh; overflow: hidden; }
        .service, .app, .command, .sim { position: absolute; }
        .service { left: 161px; top: 64px; width: 1012px; height: 740px; }
        .app { left: 4px; top: 0; width: 658px; height: 737px; }
        .command { left: 240px; top: 134px; width: 386px; height: 293px; }
        .sim { left: 671px; top: 117px; width: 653px; height: 401px; }
      </style>
      <win-frame class="service" full><service-panel></service-panel></win-frame>
      <app-window class="app"></app-window>
      <win-frame class="command" label="Command to Device 11 &quot;ADAM-6015 Server room&quot;"><command-form></command-form></win-frame>
      <win-frame class="sim" full active label="MODBUS Eth. TCP/IP PLC - Simulator (port: 502)">
        <app-icon slot="icon" name="sim"></app-icon>
        <plc-simulator></plc-simulator>
      </win-frame>
    `;
  }
}

customElements.define('app-icon', AppIcon);
customElements.define('scroll-bar', ScrollBar);
customElements.define('win-frame', WinFrame);
customElements.define('project-tree', ProjectTree);
customElements.define('device-console', DeviceConsole);
customElements.define('push-button', PushButton);
customElements.define('app-window', AppWindow);
customElements.define('command-form', CommandForm);
customElements.define('service-panel', ServicePanel);
customElements.define('coil-grid', CoilGrid);
customElements.define('combo-box', ComboBox);
customElements.define('plc-simulator', PlcSimulator);
customElements.define('desk-top', DeskTop);
</script>
</body>
</html>
